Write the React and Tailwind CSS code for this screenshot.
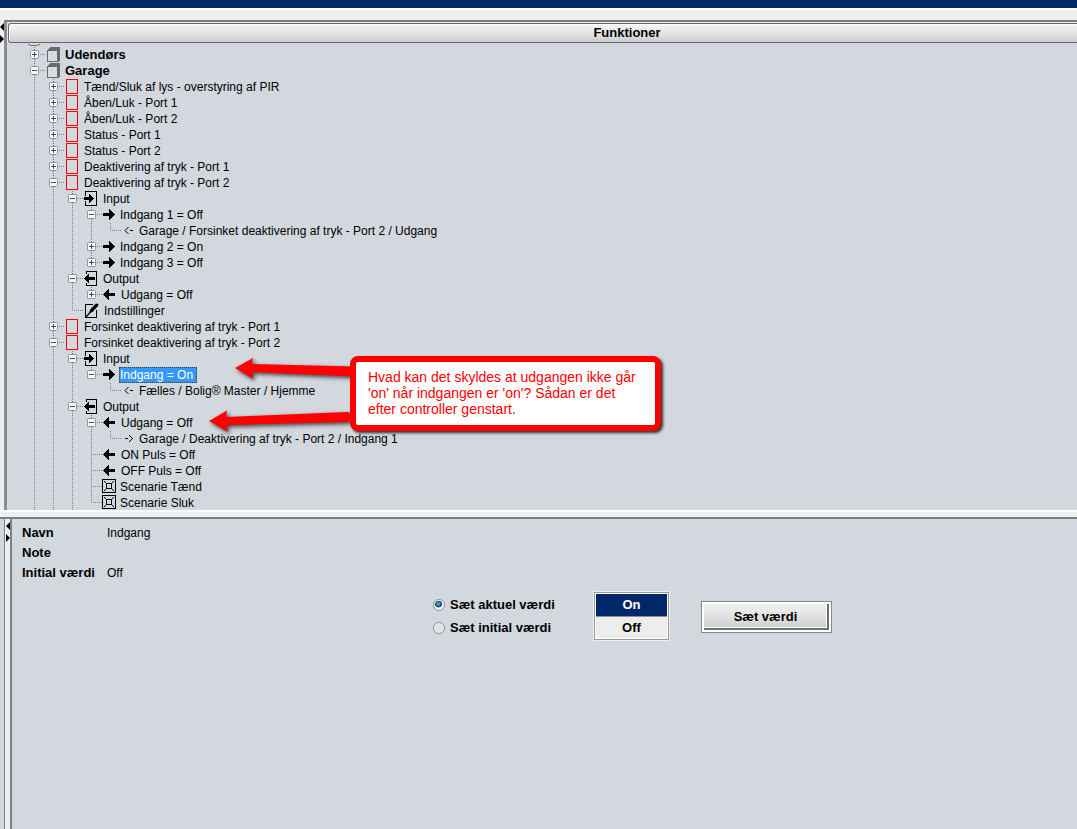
import React, { useState } from "react";

const TREE = [
  { label: "Udendørs", icon: "book", state: "closed", bold: true },
  {
    label: "Garage",
    icon: "book",
    state: "open",
    bold: true,
    more: true,
    children: [
      { label: "Tænd/Sluk af lys - overstyring af PIR", icon: "block", state: "closed" },
      { label: "Åben/Luk - Port 1", icon: "block", state: "closed" },
      { label: "Åben/Luk - Port 2", icon: "block", state: "closed" },
      { label: "Status - Port 1", icon: "block", state: "closed" },
      { label: "Status - Port 2", icon: "block", state: "closed" },
      { label: "Deaktivering af tryk - Port 1", icon: "block", state: "closed" },
      {
        label: "Deaktivering af tryk - Port 2",
        icon: "block",
        state: "open",
        children: [
          {
            label: "Input",
            icon: "input",
            state: "open",
            children: [
              {
                label: "Indgang 1 = Off",
                icon: "right",
                state: "open",
                children: [
                  { label: "Garage / Forsinket deaktivering af tryk - Port 2 / Udgang", icon: "linkIn" },
                ],
              },
              { label: "Indgang 2 = On", icon: "right", state: "closed" },
              { label: "Indgang 3 = Off", icon: "right", state: "closed" },
            ],
          },
          {
            label: "Output",
            icon: "output",
            state: "open",
            children: [{ label: "Udgang = Off", icon: "left", state: "closed" }],
          },
          { label: "Indstillinger", icon: "edit" },
        ],
      },
      { label: "Forsinket deaktivering af tryk - Port 1", icon: "block", state: "closed" },
      {
        label: "Forsinket deaktivering af tryk - Port 2",
        icon: "block",
        state: "open",
        more: true,
        children: [
          {
            label: "Input",
            icon: "input",
            state: "open",
            children: [
              {
                label: "Indgang = On",
                icon: "right",
                state: "open",
                selected: true,
                children: [{ label: "Fælles / Bolig® Master / Hjemme", icon: "linkIn" }],
              },
            ],
          },
          {
            label: "Output",
            icon: "output",
            state: "open",
            more: true,
            children: [
              {
                label: "Udgang = Off",
                icon: "left",
                state: "open",
                children: [
                  { label: "Garage / Deaktivering af tryk - Port 2 / Indgang 1", icon: "linkOut" },
                ],
              },
              { label: "ON Puls = Off", icon: "left" },
              { label: "OFF Puls = Off", icon: "left" },
              { label: "Scenarie Tænd", icon: "scene" },
              { label: "Scenarie Sluk", icon: "scene" },
            ],
          },
        ],
      },
    ],
  },
];

function flatten(nodes, guides = []) {
  return nodes.flatMap((node, i) => {
    const continues = i < nodes.length - 1 || Boolean(node.more);
    return [
      { ...node, guides, continues },
      ...flatten(node.children || [], [...guides, continues]),
    ];
  });
}

const ROWS = flatten(TREE);

const RIGHT_ARROW = "M0 6h6V2h1v1h1v1h1v1h1v1h1v1h1v1h-1v1h-1v1h-1v1h-1v1h-1v1h-1V9H0z";
const LEFT_ARROW = "M12 6h-6V2h-1v1h-1v1h-1v1h-1v1h-1v1h-1v1h1v1h1v1h1v1h1v1h1v1h1V9h6z";

const ICONS = {
  book: (
    <svg className="ml-[3px] w-[18px] h-4 shrink-0" viewBox="0 0 18 16" shapeRendering="crispEdges">
      <path d="M0 3L3 0H13V13L11 15H0z" fill="#696969" />
      <path d="M1 4H10V14H1z" fill="#dadcdf" />
    </svg>
  ),
  block: (
    <svg className="ml-[3px] w-[18px] h-4 shrink-0" viewBox="0 0 18 16" shapeRendering="crispEdges">
      <rect x="0.5" y="0.5" width="11" height="14" fill="none" stroke="#f00" />
    </svg>
  ),
  input: (
    <svg className="ml-[2px] w-[19px] h-4 shrink-0" viewBox="0 0 19 16" shapeRendering="crispEdges">
      <path d="M1.5 5V0.5H12.5V14.5H1.5V10" fill="none" stroke="#000" />
      <path d="M0 6h5V3h1v1h1v1h1v1h1v1h1v1h-1v1h-1v1h-1v1h-1v1h-1V9H0z" fill="#000" />
    </svg>
  ),
  output: (
    <svg className="ml-[2px] w-[19px] h-4 shrink-0" viewBox="0 0 19 16" shapeRendering="crispEdges">
      <path d="M2.5 3V0.5H12.5V14.5H2.5V12" fill="none" stroke="#000" />
      <path d="M11 6h-6V3h-1v1h-1v1h-1v1h-1v1h-1v1h1v1h1v1h1v1h1v1h1V9h6z" fill="#000" />
    </svg>
  ),
  right: (
    <svg className="ml-[2px] w-4 h-4 shrink-0" viewBox="0 0 16 16" shapeRendering="crispEdges">
      <path d={RIGHT_ARROW} fill="#000" />
    </svg>
  ),
  left: (
    <svg className="ml-[2px] w-[18px] h-4 shrink-0" viewBox="0 0 18 16" shapeRendering="crispEdges">
      <path d={LEFT_ARROW} fill="#000" />
    </svg>
  ),
  edit: (
    <svg className="ml-[2px] w-[20px] h-4 shrink-0" viewBox="0 0 20 16">
      <path d="M9 1.5H1.5V14.5H12.5V7" fill="none" stroke="#000" shapeRendering="crispEdges" />
      <path d="M1.5 14.5L7 8.5" stroke="#000" strokeWidth="1.2" />
      <path d="M5 10L6.5 6L12 0.5L14.5 1L14 3L8.5 9z" fill="#000" />
    </svg>
  ),
  scene: (
    <svg className="ml-px w-[18px] h-4 shrink-0" viewBox="0 0 18 16" shapeRendering="crispEdges">
      <path d="M0.5 0.5H13.5V13.5H0.5zM4.5 4.5H9.5V9.5H4.5z" fill="none" stroke="#000" />
      <path d="M2 2h1v1h1v1h-1v-1h-1zM11 2h1v1h-1v1h-1v-1h1zM2 11h1v-1h1v1h-1v1h-1zM11 12h1v-1h-1v-1h-1v1h1z" fill="#000" />
    </svg>
  ),
  linkIn: (
    <svg className="ml-1 w-[15px] h-4 shrink-0" viewBox="0 0 15 16">
      <path d="M4.5 4L1 7.5L4.5 11M6 7.5H9" fill="none" stroke="#000" />
    </svg>
  ),
  linkOut: (
    <svg className="ml-1 w-[15px] h-4 shrink-0" viewBox="0 0 15 16">
      <path d="M5 4L8.5 7.5L5 11M1 7.5H4" fill="none" stroke="#000" />
    </svg>
  ),
};

function Guide({ d }) {
  return (
    <svg className="w-[19px] h-4 shrink-0 overflow-visible" viewBox="0 0 19 16" shapeRendering="crispEdges">
      <path d={d} fill="none" stroke="#7c7f84" strokeDasharray="1 1" />
    </svg>
  );
}

function Expander({ row }) {
  const line = row.continues ? "M9.5 0V16M11 7.5H20" : "M9.5 0V8M11 7.5H20";
  if (!row.state) return <Guide d={line} />;
  return (
    <span className="grid w-[19px] h-4 shrink-0">
      <span className="col-start-1 row-start-1 flex">
        <Guide d={line} />
      </span>
      <button
        type="button"
        aria-label={(row.state === "open" ? "Luk " : "Åbn ") + row.label}
        className="col-start-1 row-start-1 z-10 mt-[3px] ml-[5px] w-[9px] h-[9px]"
      >
        <svg className="block w-[9px] h-[9px]" viewBox="0 0 9 9">
          <rect x="0.5" y="0.5" width="8" height="8" rx="1" fill="#f7f7f7" stroke="#929292" />
          <path d={row.state === "open" ? "M2 4.5H7" : "M2 4.5H7M4.5 2V7"} stroke="#3149a5" />
        </svg>
      </button>
    </span>
  );
}

function TreeRow({ row }) {
  return (
    <li
      role="treeitem"
      aria-level={row.guides.length + 1}
      aria-selected={Boolean(row.selected)}
      className="flex h-4 items-start whitespace-nowrap"
    >
      {row.guides.map((on, i) => (
        <Guide key={i} d={on ? "M9.5 0V16" : ""} />
      ))}
      <Expander row={row} />
      {ICONS[row.icon]}
      {row.selected ? (
        <span className="h-4 border border-dotted border-[#5a3208] bg-[#3399ff] pr-[3px] leading-[14px] text-white">
          {row.label}
        </span>
      ) : (
        <span className={row.bold ? "text-[13px] font-bold" : row.icon === "right" ? "pl-px" : ""}>{row.label}</span>
      )}
    </li>
  );
}

function SplitArrows() {
  return (
    <svg className="block w-1 h-5" viewBox="0 0 4 20">
      <path d="M4 0V8L0 4zM0 12V20L4 16z" fill="#000" />
    </svg>
  );
}

function Callout() {
  return (
    <div className="absolute left-[209px] top-[356px] flex">
      <svg className="w-[150px] h-[84px] shrink-0 overflow-visible drop-shadow-[2px_2px_2px_rgba(0,0,0,0.7)]" viewBox="0 0 150 84">
        <path d="M26 12L44 2L43 8L146 10.5V20.5L43 16L44 23z" fill="#f00" />
        <path d="M0 65L18 54.5L17 61L138 56C143 56 144 65 138 66L17 69L19 76z" fill="#f00" />
      </svg>
      <p className="z-10 -ml-[9px] h-[75px] w-[311px] rounded-[8px] border-[6px] border-[#f00] bg-white pt-[7px] pl-3 text-[14px] leading-4 text-[#f00] shadow-[2px_2px_3px_rgba(0,0,0,0.8)]">
        Hvad kan det skyldes at udgangen ikke går
        <br />
        'on' når indgangen er 'on'? Sådan er det
        <br />
        efter controller genstart.
      </p>
    </div>
  );
}

function Choice({ label, checked, onChange }) {
  return (
    <label className="flex h-[23px] items-center gap-[5px]">
      <input
        type="radio"
        name="target"
        checked={checked}
        onChange={onChange}
        className="m-0 size-3 appearance-none rounded-full border border-[#8b8f94] bg-[#e2e3e5] shadow-[inset_0_0_0_1px_#f4f4f4] checked:bg-[radial-gradient(circle_at_45%_40%,#6ec6ee_0,#1b6fa5_25%,#0c3152_38%,#f0f2f4_46%)]"
      />
      {label}
    </label>
  );
}

export default function App() {
  const [target, setTarget] = useState("aktuel");
  const [value, setValue] = useState("On");
  return (
    <div className="relative flex min-h-screen flex-col overflow-hidden bg-[#efefef] font-['Liberation_Sans',Arial,sans-serif] text-[12px] leading-4 text-black">
      <div className="h-2 bg-[#002868]" />
      <div className="h-3 border-t-2 border-white bg-[#efefef]" />

      <section className="flex">
        <div className="w-1 shrink-0 pt-[3px]">
          <SplitArrows />
        </div>
        <div className="min-w-0 grow border-t-2 border-l-[3px] border-t-[#7b7d80] border-l-[#8a8d93] bg-[#d3d7de]">
          <div className="bg-[#e6e7e9] pt-px pl-px">
            <h1 className="flex h-5 items-center justify-center rounded-l-[3px] border border-r-0 border-[#66686b] bg-linear-to-b from-[#f6f6f6] from-0% via-[#e4e4e4] via-50% to-[#cccccc] pl-[168px] text-[13px] font-bold shadow-[inset_1px_1px_0_#fff]">
              Funktioner
            </h1>
          </div>
          <div className="flex h-1 pl-[21px]">
            <svg className="w-3 h-1" viewBox="0 0 12 4" shapeRendering="crispEdges">
              <path d="M0 1.5H2M10 1.5H12M2 2.5H10" stroke="#6f7175" />
            </svg>
          </div>
          <ul role="tree" aria-label="Funktioner" className="pl-[18px]">
            {ROWS.map((row, i) => (
              <TreeRow key={i} row={row} />
            ))}
          </ul>
        </div>
      </section>

      <div className="z-10 -mt-px h-[7px] border-t-2 border-white bg-[#efefef]" />

      <section className="flex grow">
        <div className="w-[5px] shrink-0 border-t-2 border-r border-[#7b7f86] bg-[#d3d7de]" />
        <div className="w-[5px] shrink-0 border-t-2 border-[#7b7f86] pt-[3px] pl-px">
          <SplitArrows />
        </div>
        <div className="min-w-0 grow border-t-2 border-l-2 border-[#7b7f86] bg-[#d3d7de] pt-1 text-[13px] font-bold">
          <dl className="grid grid-cols-[84px_1fr] gap-x-px pl-[10px] leading-5">
            <dt>Navn</dt>
            <dd className="text-[12px] font-normal">Indgang</dd>
            <dt>Note</dt>
            <dd />
            <dt className="whitespace-nowrap">Initial værdi</dt>
            <dd className="text-[12px] font-normal">Off</dd>
          </dl>
          <div className="flex items-start pt-[9px] pl-[421px]">
            <fieldset className="w-[161px] pt-px">
              <Choice label="Sæt aktuel værdi" checked={target === "aktuel"} onChange={() => setTarget("aktuel")} />
              <Choice label="Sæt initial værdi" checked={target === "initial"} onChange={() => setTarget("initial")} />
            </fieldset>
            <div role="listbox" aria-label="Værdi" className="w-[75px] border border-[#9a9a9a] bg-white p-px shadow-[0_0_0_1px_#eceef0]">
              {["On", "Off"].map((v) => (
                <button
                  key={v}
                  type="button"
                  role="option"
                  aria-selected={value === v}
                  onClick={() => setValue(v)}
                  className={
                    value === v
                      ? "block h-[22px] w-full bg-[#002868] font-bold text-white"
                      : "block h-[22px] w-full border-t border-[#8c8c8c] bg-[#ededeb] pt-px font-bold"
                  }
                >
                  {v}
                </button>
              ))}
            </div>
            <div className="mt-[9px] ml-8 border border-[#85878a] bg-white p-[2px]">
              <button
                type="button"
                className="block h-[26px] w-[125px] border-r-2 border-b-2 border-[#6f6f6f] bg-linear-to-b from-[#f2f2f2] from-0% via-[#e2e2e2] via-50% to-[#cecece] pt-[2px] font-bold shadow-[inset_-1px_-1px_0_#fff]"
              >
                Sæt værdi
              </button>
            </div>
          </div>
        </div>
      </section>

      <Callout />
    </div>
  );
}
